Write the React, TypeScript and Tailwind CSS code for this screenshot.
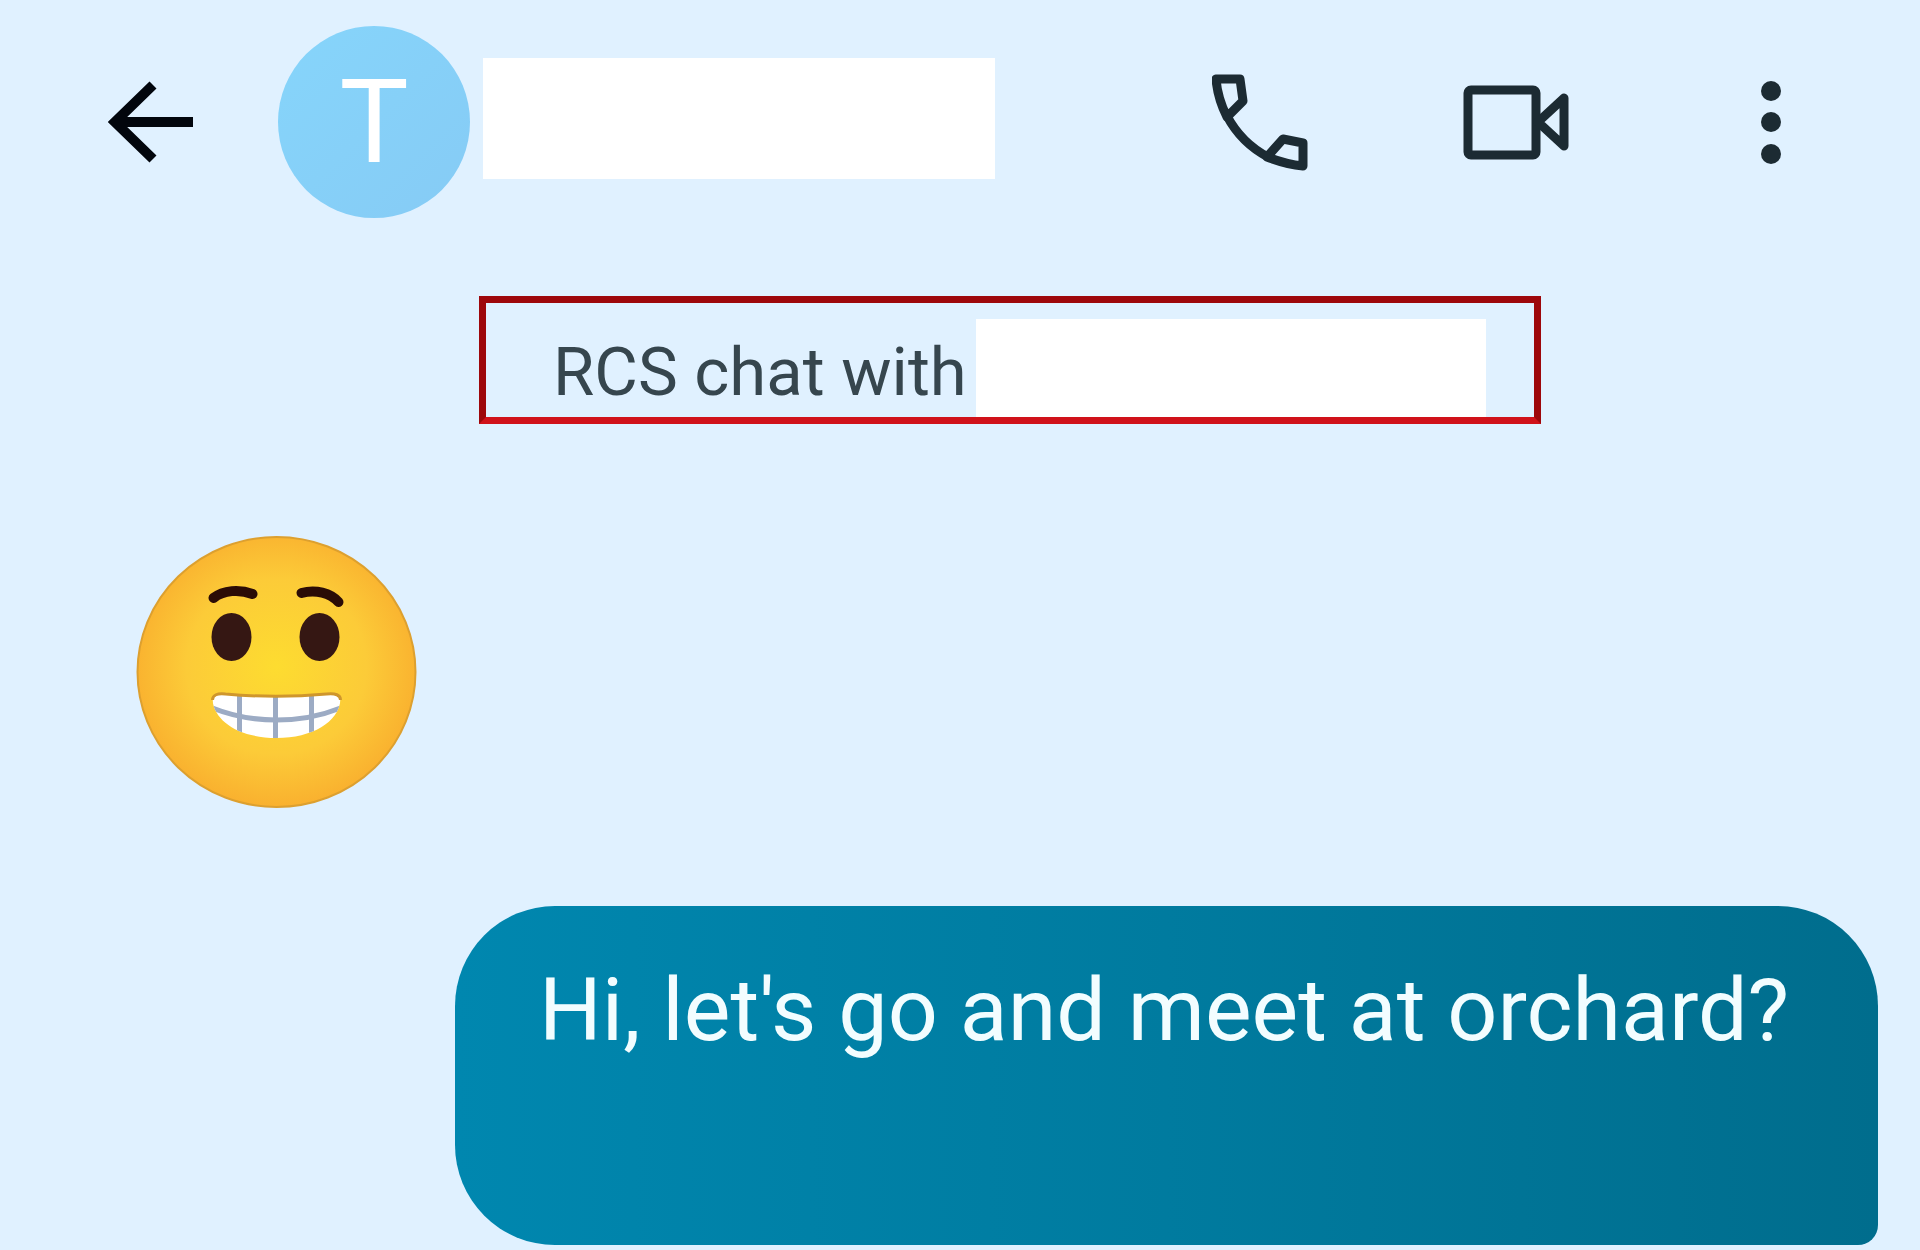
import { useState } from 'react';

interface IconProps {
  className?: string;
}

function BackIcon({ className }: IconProps) {
  return (
    <svg viewBox="0 0 85 82" className={className} fill="none" stroke="#02060d" strokeWidth="10" aria-hidden="true">
      <path d="M45 4 7 41l38 37M7 41h78" />
    </svg>
  );
}

function PhoneIcon({ className }: IconProps) {
  return (
    <svg viewBox="0 0 96 98" className={className} fill="none" stroke="#1c2b33" strokeWidth="9" strokeLinejoin="round" aria-hidden="true">
      <path d="M4 6h24l3 22-16 16C9 32 5 18 4 6Z" />
      <path d="M55 84 71 66l20 4v23C80 92 68 89 55 84Z" />
      <path d="M15 43c9 17 24 32 41 41" />
    </svg>
  );
}

function VideoIcon({ className }: IconProps) {
  return (
    <svg viewBox="0 0 106 76" className={className} fill="none" stroke="#1c2b33" strokeWidth="9" strokeLinejoin="round" aria-hidden="true">
      <rect x="5" y="6" width="68" height="65" rx="3" />
      <path d="M75 38 101 14v48Z" />
    </svg>
  );
}

function MoreIcon({ className }: IconProps) {
  return (
    <svg viewBox="0 0 22 86" className={className} fill="#1c2b33" aria-hidden="true">
      <circle cx="11" cy="12" r="10" />
      <circle cx="11" cy="43" r="10" />
      <circle cx="11" cy="75" r="10" />
    </svg>
  );
}

function GrimaceEmoji({ className }: IconProps) {
  return (
    <svg viewBox="0 0 280 272" className={className} role="img" aria-label="Grimacing face">
      <defs>
        <radialGradient id="face" cx="50%" cy="48%" r="54%">
          <stop offset="0" stopColor="#fddc30" />
          <stop offset="0.6" stopColor="#fccb38" />
          <stop offset="1" stopColor="#f9ae2e" />
        </radialGradient>
        <clipPath id="mouth">
          <path d="M76 164c0-5 5-7 13-6 33 3 68 3 101 0 9-1 14 1 14 6-2 22-28 38-64 38s-62-16-64-38Z" />
        </clipPath>
      </defs>
      <ellipse cx="140" cy="136" rx="139" ry="135" fill="url(#face)" stroke="#dda02f" strokeWidth="2" />
      <g fill="none" stroke="#2b0c06" strokeWidth="10" strokeLinecap="round">
        <path d="M77 62c10-8 26-9 39-4" />
        <path d="M165 57c14-4 29 0 37 9" />
      </g>
      <ellipse cx="95" cy="101" rx="20" ry="24" fill="#351713" />
      <ellipse cx="183" cy="101" rx="20" ry="24" fill="#351713" />
      <g clipPath="url(#mouth)">
        <path d="M70 150h140v60H70Z" fill="#fff" />
        <g fill="none" stroke="#9cabc4" strokeWidth="5">
          <path d="M76 172c40 16 88 16 128 0" />
          <path d="M103 150v56M139 150v56M175 150v56" />
        </g>
      </g>
      <path
        d="M76 164c0-5 5-7 13-6 33 3 68 3 101 0 9-1 14 1 14 6"
        fill="none"
        stroke="#cf962c"
        strokeWidth="3"
      />
    </svg>
  );
}

function TopBar() {
  const [name, setName] = useState('');

  return (
    <header className="flex items-center pl-[108px] pr-[138px] pt-[26px]">
      <button type="button" aria-label="Back" className="shrink-0">
        <BackIcon className="h-[82px] w-[85px]" />
      </button>
      <div className="ml-[85px] flex size-48 shrink-0 items-center justify-center rounded-full bg-linear-to-br from-[#86d5fb] to-[#86cbf5] text-[116px] leading-none text-white">
        T
      </div>
      <input
        aria-label="Contact name"
        value={name}
        onChange={(e) => setName(e.target.value)}
        className="ml-[13px] mt-8 h-[121px] w-[512px] self-start bg-white px-6 text-[67px] outline-none"
      />
      <nav className="ml-auto flex shrink-0 items-center">
        <button type="button" aria-label="Call">
          <PhoneIcon className="h-[98px] w-24" />
        </button>
        <button type="button" aria-label="Video call" className="ml-[155px]">
          <VideoIcon className="h-[76px] w-[106px]" />
        </button>
        <button type="button" aria-label="More options" className="ml-[191px]">
          <MoreIcon className="h-[86px] w-[22px]" />
        </button>
      </nav>
    </header>
  );
}

function ChatNotice() {
  return (
    <div className="ml-[479px] mt-[78px] flex h-32 w-[1062px] items-end border-[7px] border-t-[#9d070b] border-r-[#9d070b] border-b-[#d0121a] border-l-[#9d070b] pl-[67px]">
      <p className="shrink-0 pb-[11px] text-[67px] leading-none text-[#36464e]">RCS chat with</p>
      <span className="ml-auto mr-12 h-[98px] w-[510px] shrink-0 bg-white" />
    </div>
  );
}

export default function App() {
  return (
    <main className="flex min-h-screen flex-col bg-[#e0f1ff] font-[Roboto,sans-serif]">
      <TopBar />
      <ChatNotice />
      <section className="flex flex-col pr-[42px]">
        <GrimaceEmoji className="ml-[136px] mt-28 h-[272px] w-[281px]" />
        <p className="ml-[455px] mt-[98px] min-h-[339px] rounded-[100px] rounded-br-[20px] bg-linear-to-r from-[#0087af] via-[#007b9f] to-[#006d8d] pl-[84px] pt-[52px] text-[88px] leading-[104px] whitespace-nowrap text-[#f2fdff]">
          Hi, let's go and meet at orchard?
        </p>
      </section>
    </main>
  );
}
